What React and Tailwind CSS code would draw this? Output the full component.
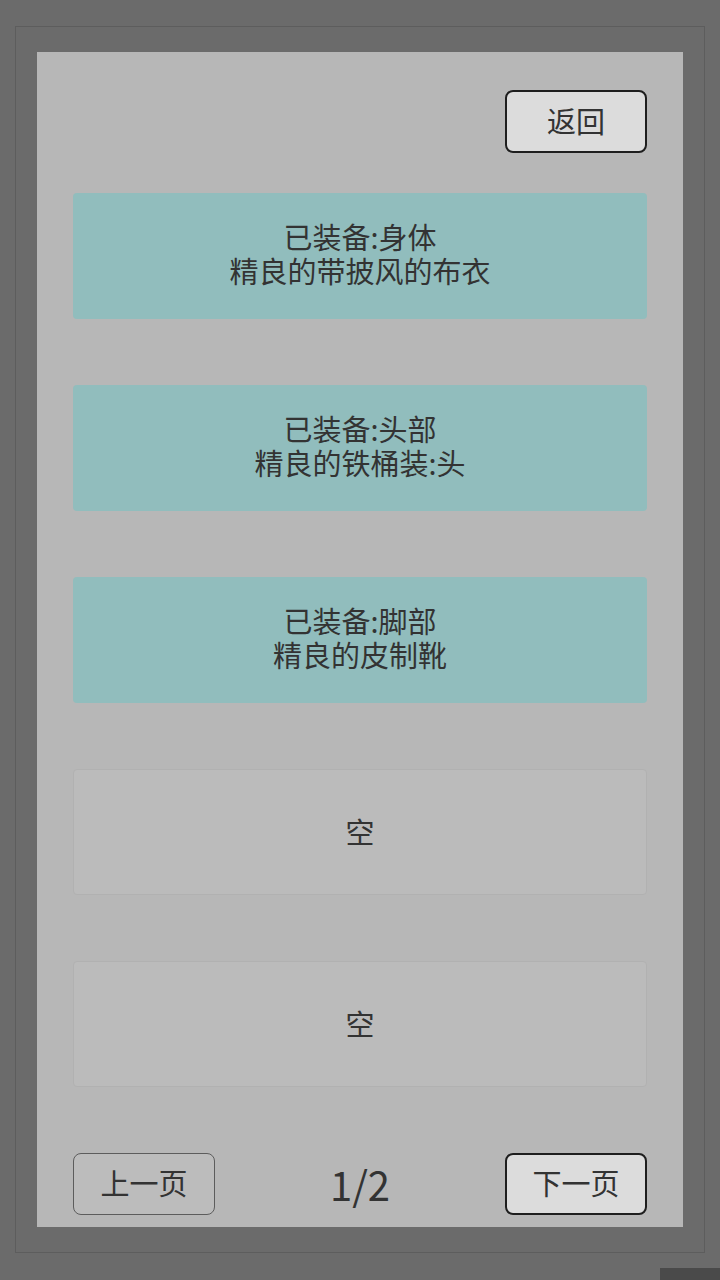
import React from 'react';

const font = { fontFamily: '"Noto Sans CJK SC", "Noto Sans", sans-serif' };

const slots = [
  { equipped: true, lines: ['已装备:身体', '精良的带披风的布衣'] },
  { equipped: true, lines: ['已装备:头部', '精良的铁桶装:头'] },
  { equipped: true, lines: ['已装备:脚部', '精良的皮制靴'] },
  { equipped: false, lines: ['空'] },
  { equipped: false, lines: ['空'] },
];

const Slot = ({ equipped, lines }) => (
  <div
    className={
      equipped
        ? 'h-[126px] rounded-[4px] bg-[#91bdbd] pb-[6px] flex flex-col items-center justify-center text-[29px] leading-[34px] text-[#333]'
        : 'h-[126px] rounded-[4px] bg-[#bbbbbb] border border-[#b1b1b1] pb-[2px] flex flex-col items-center justify-center text-[29px] leading-[34px] text-[#333]'
    }
  >
    {lines.map((l, i) => (
      <div key={i}>{l}</div>
    ))}
  </div>
);

export default function App() {
  return (
    <div className="relative w-[720px] h-[1280px] bg-[#6b6b6b] pt-[26px] px-[15px] overflow-hidden" style={font}>
      {/* outer frame */}
      <div className="h-[1227px] border border-[#5d5d5d] bg-[#6b6b6b] px-[21px] pt-[25px] pb-[25px]">
        {/* inner panel */}
        <div className="h-full bg-[#b7b7b7] px-[36px] pt-[38px] pb-[12px] flex flex-col">
          <div className="flex justify-end">
            <button className="w-[142px] h-[63px] rounded-[8px] bg-[#dcdcdc] border-2 border-[#1e1e1e] pb-[2px] text-[29px] text-[#333]">
              返回
            </button>
          </div>

          <div className="mt-[40px] flex flex-col gap-[66px]">
            {slots.map((s, i) => (
              <Slot key={i} {...s} />
            ))}
          </div>

          <div className="mt-auto flex items-center justify-between">
            <button className="w-[142px] h-[62px] rounded-[8px] bg-[#bcbcbc] border border-[#5c5c5c] pb-[2px] text-[29px] text-[#333]">
              上一页
            </button>
            <span className="text-[40px] text-[#333]">1/2</span>
            <button className="w-[142px] h-[62px] rounded-[8px] bg-[#dcdcdc] border-2 border-[#1e1e1e] pb-[2px] text-[29px] text-[#333]">
              下一页
            </button>
          </div>
        </div>
      </div>

      {/* corner block */}
      <div className="absolute right-0 bottom-0 w-[60px] h-[12px] bg-[#4a4a4a]" />
    </div>
  );
}
